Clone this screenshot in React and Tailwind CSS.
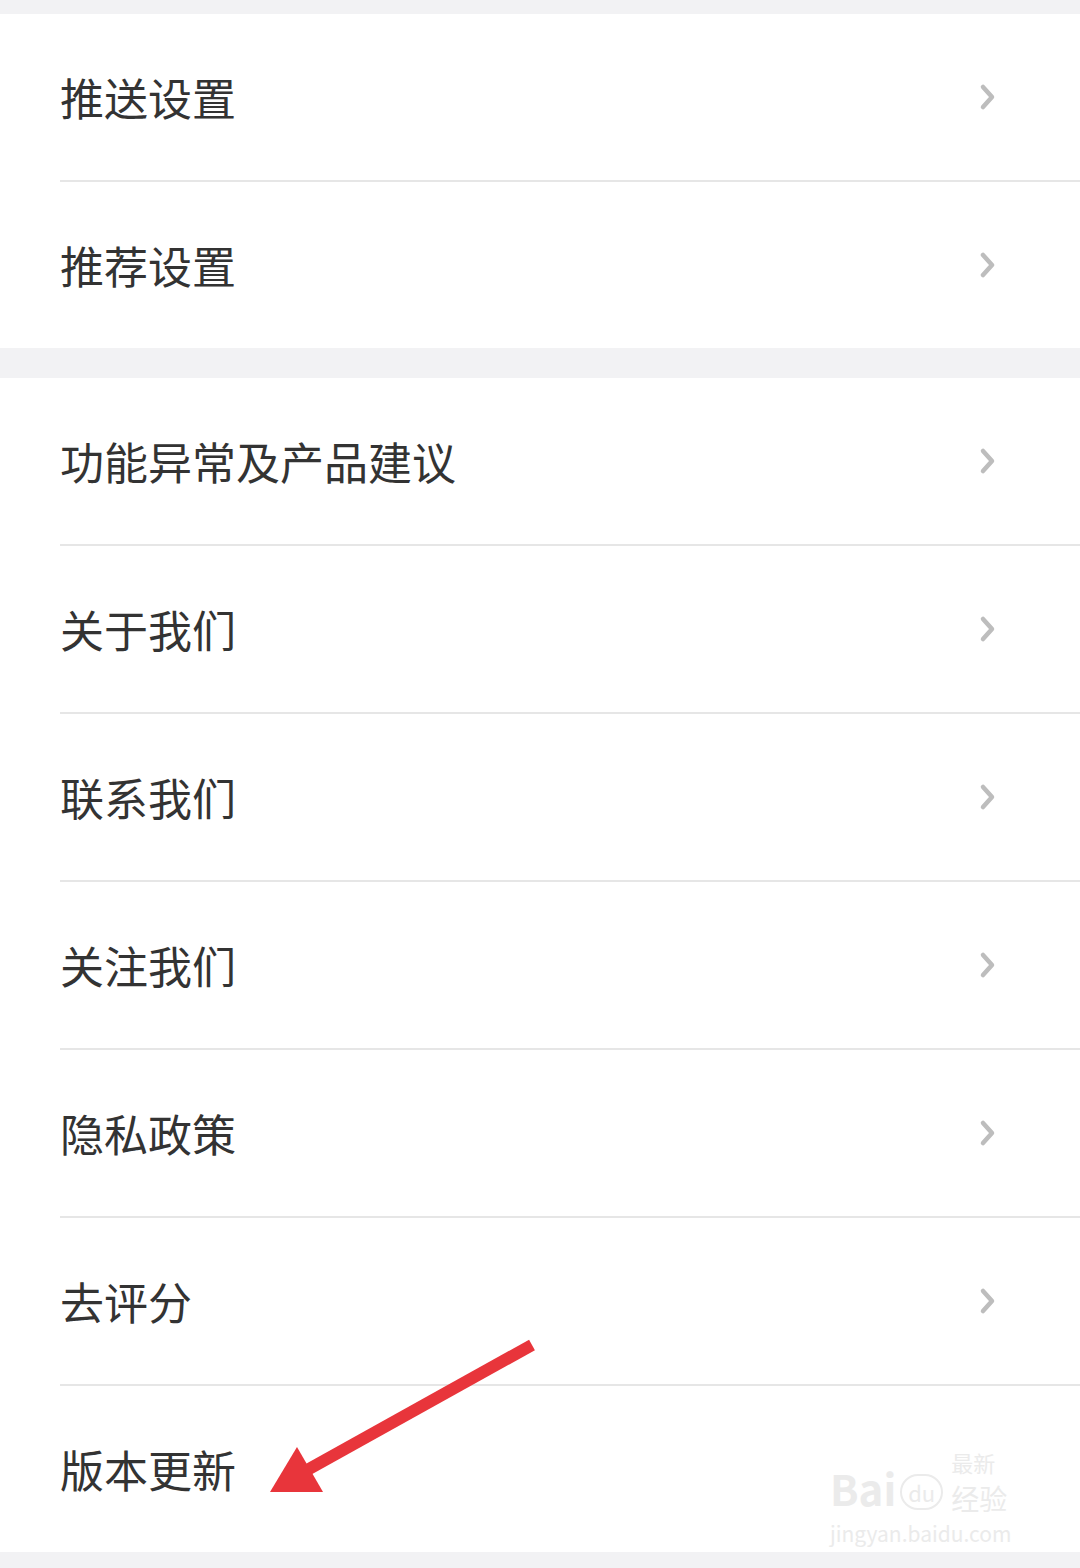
import React from "react";

const groups = [
  ["推送设置", "推荐设置"],
  ["功能异常及产品建议", "关于我们", "联系我们", "关注我们", "隐私政策", "去评分", "版本更新"],
];

function Chevron() {
  return (
    <svg width="20" height="28" viewBox="0 0 20 28" className="shrink-0">
      <path d="M5 4 L14 14 L5 24" fill="none" stroke="#bdbdbd" strokeWidth="4.5" strokeLinecap="round" strokeLinejoin="round" />
    </svg>
  );
}

function Row({ label, last, arrow }) {
  return (
    <div className="pl-[60px]">
      <div className="flex h-[166px] items-center justify-between pr-[82px]">
        <span className="text-[44px] leading-none text-[#333333]">{label}</span>
        {arrow && <Chevron />}
      </div>
      {!last && <div className="h-[2px] bg-[#e6e6e6]" />}
    </div>
  );
}

// faint baidu jingyan watermark in the lower right corner
function Watermark() {
  return (
    <div className="pointer-events-none absolute left-[830px] top-[1446px] flex flex-col text-[#ebebeb]">
      <div className="flex items-end">
        <span className="text-[42px] font-bold leading-[60px]">Bai</span>
        <span className="mx-1 mb-2 rounded-full border-2 border-[#ebebeb] px-1.5 text-[22px] leading-[32px]">du</span>
        <div className="ml-1 flex flex-col">
          <span className="text-[22px] leading-[32px]">最新</span>
          <span className="text-[28px] leading-[40px]">经验</span>
        </div>
      </div>
      <span className="text-[21px] leading-[30px]">jingyan.baidu.com</span>
    </div>
  );
}

function Arrow() {
  return (
    <svg className="pointer-events-none absolute left-0 top-0" width="1080" height="1568">
      <line x1="532" y1="1345" x2="300" y2="1474" stroke="#e8353b" strokeWidth="12" />
      <polygon points="270,1492 323,1492 297,1447" fill="#e8353b" />
    </svg>
  );
}

export default function App() {
  return (
    <div
      className="relative h-[1568px] w-[1080px] overflow-hidden bg-[#f2f2f4] pt-[14px]"
      style={{ fontFamily: '"Noto Sans CJK SC", "Noto Sans", sans-serif' }}
    >
      {groups.map((items, gi) => (
        <div key={gi} className={`bg-white ${gi > 0 ? "mt-[30px]" : ""}`}>
          {items.map((label, i) => (
            <Row
              key={label}
              label={label}
              last={i === items.length - 1}
              arrow={label !== "版本更新"}
            />
          ))}
        </div>
      ))}
      <Watermark />
      <Arrow />
    </div>
  );
}
